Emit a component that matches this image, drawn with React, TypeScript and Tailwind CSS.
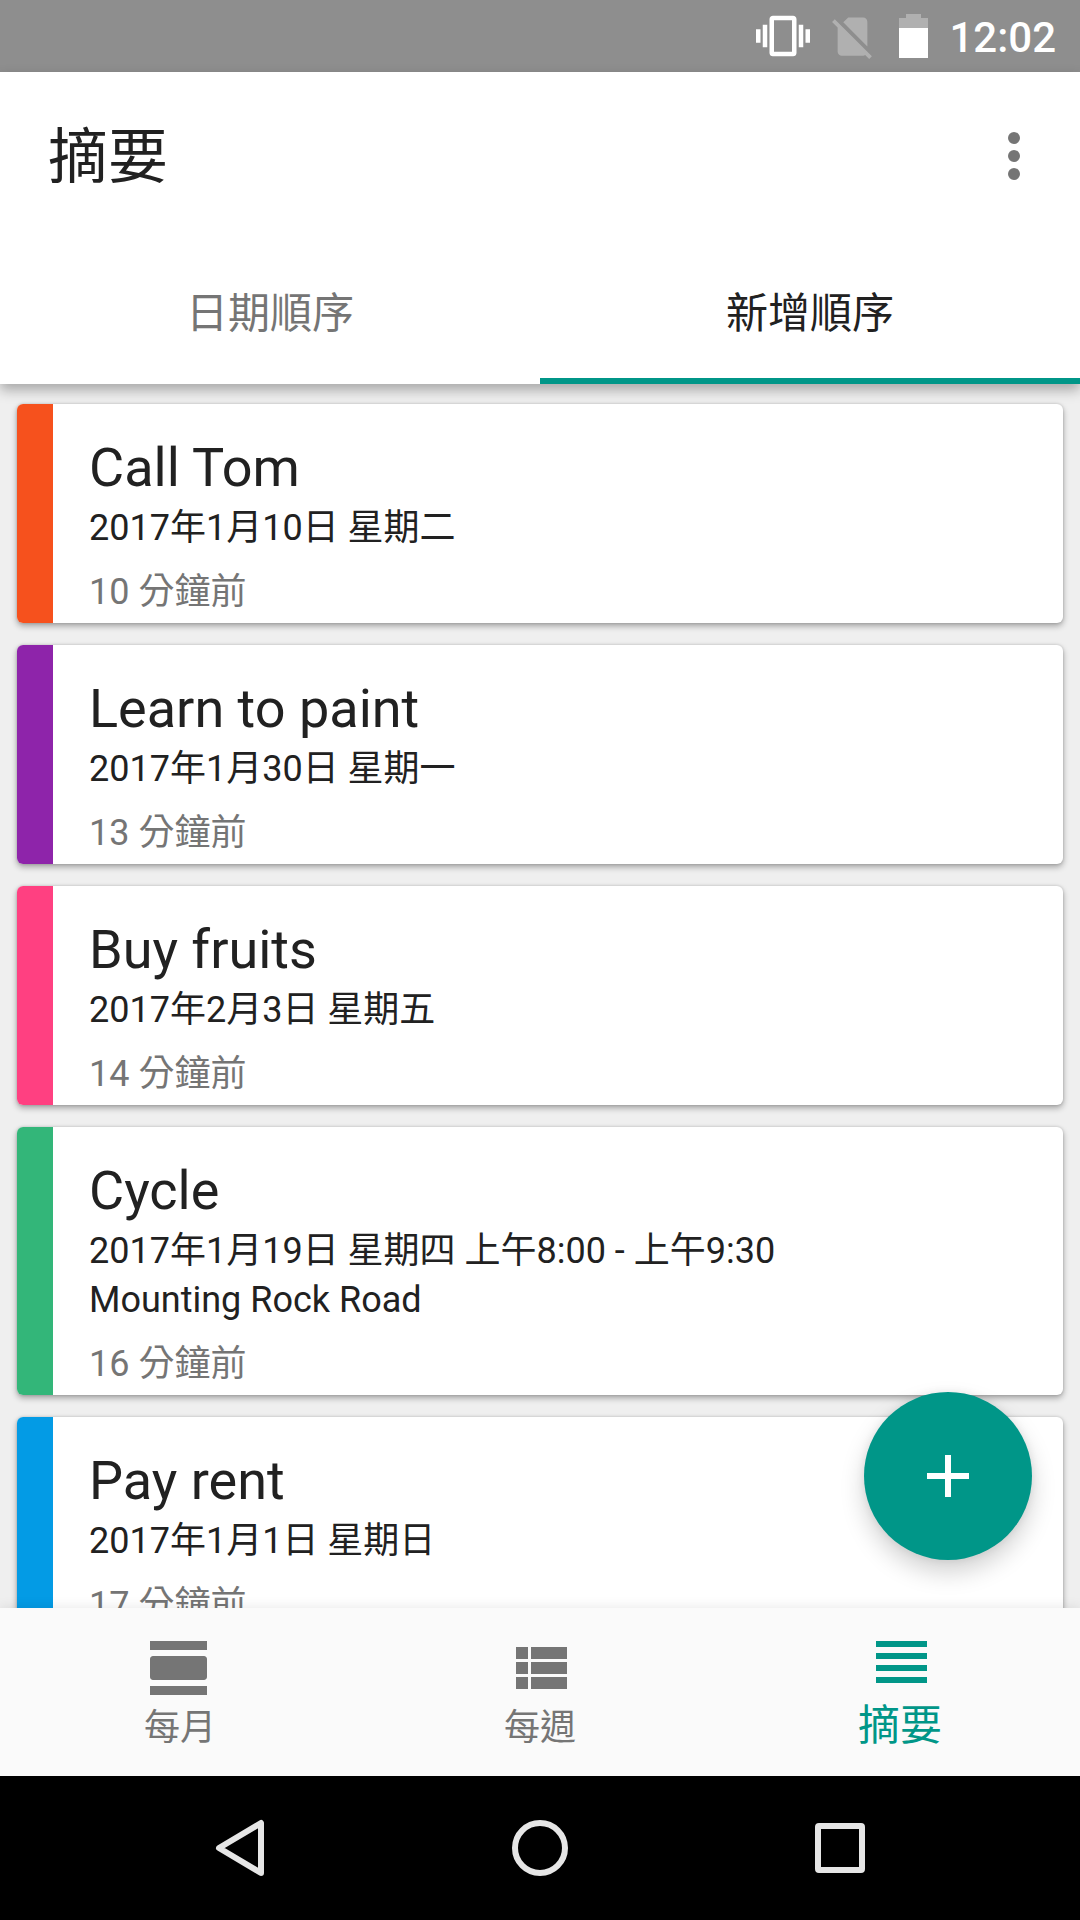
import React, { useState } from "react";

type Task = {
  title: string;
  date: string;
  location?: string;
  ago: string;
  color: string;
};

const tasks: Task[] = [
  {
    title: "Call Tom",
    date: "2017年1月10日 星期二",
    ago: "10 分鐘前",
    color: "bg-[#f6511d]",
  },
  {
    title: "Learn to paint",
    date: "2017年1月30日 星期一",
    ago: "13 分鐘前",
    color: "bg-[#8e24aa]",
  },
  {
    title: "Buy fruits",
    date: "2017年2月3日 星期五",
    ago: "14 分鐘前",
    color: "bg-[#ff4081]",
  },
  {
    title: "Cycle",
    date: "2017年1月19日 星期四 上午8:00 - 上午9:30",
    location: "Mounting Rock Road",
    ago: "16 分鐘前",
    color: "bg-[#33b679]",
  },
  {
    title: "Pay rent",
    date: "2017年1月1日 星期日",
    ago: "17 分鐘前",
    color: "bg-[#039be5]",
  },
];

const tabs = ["日期順序", "新增順序"];

const navItems = [
  {
    label: "每月",
    path: "M2 21h19v-3H2v3zM20 8H3c-.55 0-1 .45-1 1v6c0 .55.45 1 1 1h17c.55 0 1-.45 1-1V9c0-.55-.45-1-1-1zM2 3v3h19V3H2z",
  },
  {
    label: "每週",
    path: "M4 14h4v-4H4v4zm0 5h4v-4H4v4zM4 9h4V5H4v4zm5 5h12v-4H9v4zm0 5h12v-4H9v4zM9 5v4h12V5H9z",
  },
  {
    label: "摘要",
    path: "M4 15h17v-2H4v2zm0 4h17v-2H4v2zm0-8h17V9H4v2zm0-6v2h17V5H4z",
  },
];

const StatusBar = () => {
  return (
    <div className="flex h-[72px] shrink-0 items-center justify-end bg-[#8e8e8e] pr-6 text-white">
      <svg viewBox="0 0 24 24" className="mr-[17px] size-[54px] fill-current">
        <path d="M0 15h2V9H0v6zm3 2h2V7H3v10zm19-8v6h2V9h-2zm-3 8h2V7h-2v10zM16.5 3h-9C6.67 3 6 3.67 6 4.5v15c0 .83.67 1.5 1.5 1.5h9c.83 0 1.5-.67 1.5-1.5v-15c0-.83-.67-1.5-1.5-1.5zM16 19H8V5h8v14z" />
      </svg>
      <svg
        viewBox="0 0 24 24"
        className="mr-[21px] size-[51px] fill-current opacity-30"
      >
        <path d="M18.99 5c0-1.1-.89-2-1.99-2h-7L7.66 5.34 19 16.68 18.99 5zM3.65 3.88L2.38 5.15 5 7.77V19c0 1.1.9 2 2 2h10.01c.35 0 .67-.1.96-.26l1.88 1.88 1.27-1.27L3.65 3.88z" />
      </svg>
      <svg viewBox="0 0 29 44" className="mr-[21px] h-11 w-[29px] fill-current">
        <path d="M7 0h15v4h7v10H0V4h7z" opacity=".3" />
        <path d="M0 14h29v30H0z" />
      </svg>
      <span className="pt-1 text-[42px] leading-[48px] font-medium">12:02</span>
    </div>
  );
};

const TaskCard = ({ task }: { task: Task }) => {
  return (
    <li className="flex shrink-0 overflow-hidden rounded-md bg-white shadow-[0_3px_6px_rgba(0,0,0,0.32),0_0_3px_rgba(0,0,0,0.16)]">
      <div className={`w-9 shrink-0 ${task.color}`} />
      <div className="min-w-0 flex-1 pt-7 pr-4 pb-1.5 pl-9 text-[36px] leading-[49px]">
        <h2 className="text-[54px] leading-[72px]">{task.title}</h2>
        <p>{task.date}</p>
        {task.location && <p>{task.location}</p>}
        <p className="mt-[15px] text-[#757575]">{task.ago}</p>
      </div>
    </li>
  );
};

const SystemBar = () => {
  return (
    <div className="h-36 shrink-0 bg-black">
      <div className="mx-auto grid h-full w-5/6 grid-cols-3">
        <button aria-label="返回" className="flex items-center justify-center">
          <svg
            viewBox="0 0 72 72"
            className="size-[72px] fill-none stroke-[#e6e6e6] stroke-6"
            strokeLinejoin="round"
          >
            <path d="M57 11v50L15 36z" />
          </svg>
        </button>
        <button aria-label="主畫面" className="flex items-center justify-center">
          <svg
            viewBox="0 0 72 72"
            className="size-[72px] fill-none stroke-[#e6e6e6] stroke-6"
          >
            <circle cx="36" cy="36" r="25" />
          </svg>
        </button>
        <button aria-label="總覽" className="flex items-center justify-center">
          <svg
            viewBox="0 0 72 72"
            className="size-[72px] fill-none stroke-[#e6e6e6] stroke-6"
          >
            <rect x="14" y="14" width="44" height="44" rx="1" />
          </svg>
        </button>
      </div>
    </div>
  );
};

const App = () => {
  const [tab, setTab] = useState<number>(1);
  const [page, setPage] = useState<number>(2);

  return (
    <div
      lang="zh-Hant"
      className="flex h-screen flex-col bg-[#efefef] font-[Roboto,'Noto_Sans_CJK_TC',sans-serif] text-[#212121]"
    >
      <StatusBar />
      <header className="relative z-10 shrink-0 bg-white shadow-[0_6px_12px_rgba(0,0,0,0.3)]">
        <div className="flex h-[168px] items-center justify-between pr-[30px] pl-12">
          <h1 className="pt-1 text-[60px] leading-[72px]">
            {navItems[page].label}
          </h1>
          <button aria-label="更多選項">
            <svg viewBox="0 0 24 24" className="size-[72px] fill-[#757575]">
              <circle cx="12" cy="6" r="2" />
              <circle cx="12" cy="12" r="2" />
              <circle cx="12" cy="18" r="2" />
            </svg>
          </button>
        </div>
        <div role="tablist" className="grid h-36 grid-cols-2">
          {tabs.map((label, i) => (
            <button
              key={label}
              role="tab"
              aria-selected={tab === i}
              onClick={() => setTab(i)}
              className={`border-b-6 pt-2.5 text-[42px] leading-[48px] ${
                tab === i
                  ? "border-[#009688]"
                  : "border-transparent text-[#757575]"
              }`}
            >
              {label}
            </button>
          ))}
        </div>
      </header>
      <main className="relative min-h-0 flex-1">
        <ul className="flex h-full flex-col gap-[22px] overflow-y-auto px-[17px] py-5 [scrollbar-width:none]">
          {tasks.map((task) => (
            <TaskCard key={task.title} task={task} />
          ))}
        </ul>
        <button
          aria-label="新增"
          className="absolute right-12 bottom-12 flex size-[168px] items-center justify-center rounded-full bg-[#009688] shadow-[0_12px_24px_rgba(0,0,0,0.18),0_0_8px_rgba(0,0,0,0.08)]"
        >
          <svg viewBox="0 0 24 24" className="size-[72px] fill-white">
            <path d="M19 13h-6v6h-2v-6H5v-2h6V5h2v6h6v2z" />
          </svg>
        </button>
      </main>
      <nav className="relative z-10 grid h-[168px] shrink-0 grid-cols-3 bg-[#fafafa] shadow-[0_0_12px_rgba(0,0,0,0.1)]">
        {navItems.map((item, i) => (
          <button
            key={item.label}
            onClick={() => setPage(i)}
            className={`flex flex-col items-center justify-start ${
              page === i
                ? "pt-[18px] text-[42px] leading-[56px] text-[#009688]"
                : "pt-6 text-[36px] leading-[48px] text-[#757575]"
            }`}
          >
            <svg viewBox="0 0 24 24" className="size-[72px] fill-current">
              <path d={item.path} />
            </svg>
            {item.label}
          </button>
        ))}
      </nav>
      <SystemBar />
    </div>
  );
};

export default App;
